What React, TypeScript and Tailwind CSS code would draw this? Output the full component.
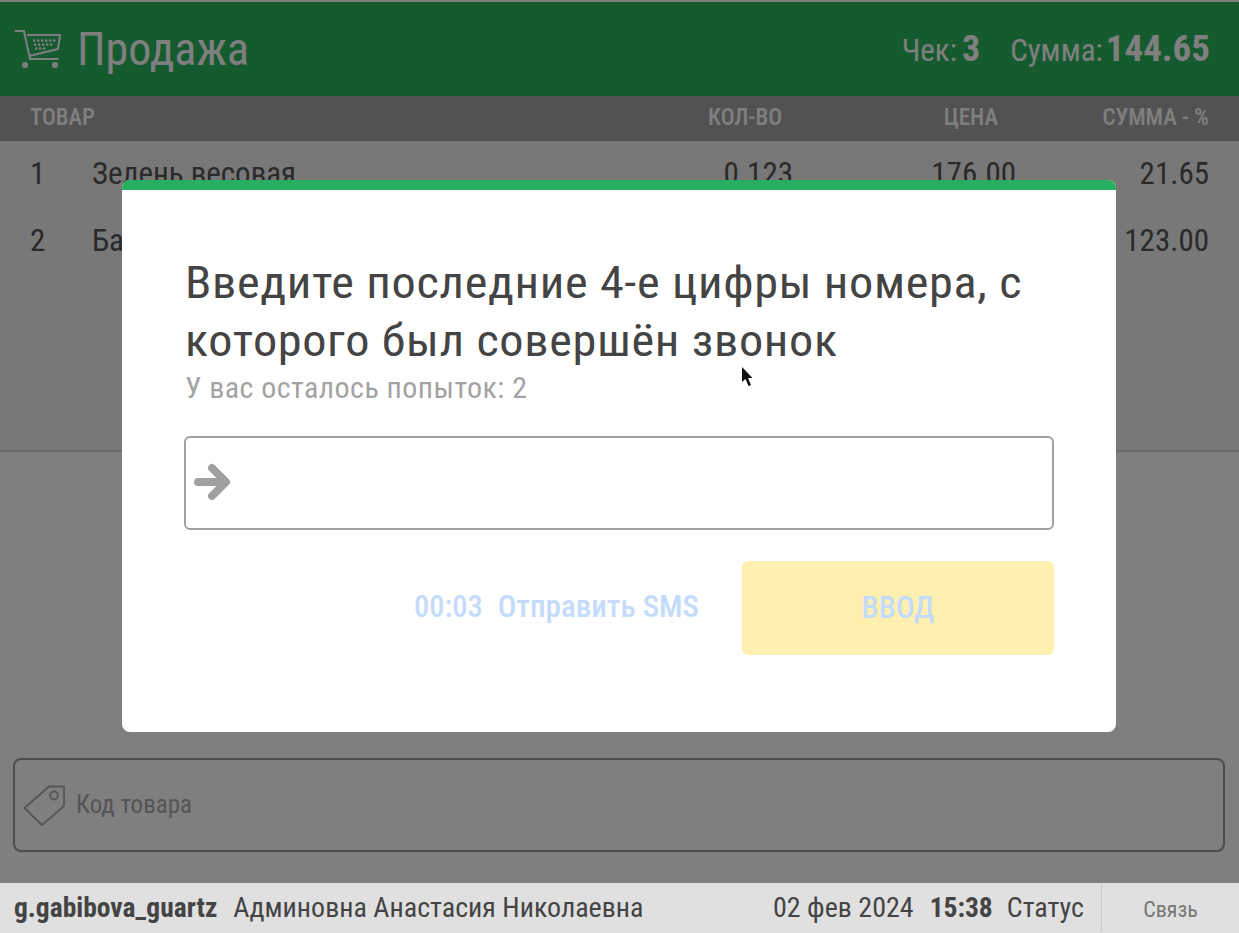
import React from "react";

const font = { fontFamily: '"Roboto Condensed", Roboto, "Noto Sans", sans-serif' };

function Cart() {
  const rows = [
    [19, 23, 27, 31, 35, 39],
    [20, 24, 28, 32, 36],
    [21, 25, 29],
  ];
  return (
    <svg width="48" height="40" viewBox="0 0 48 40" fill="none" className="shrink-0">
      <path d="M1.5 2H10L16 30H44" stroke="#fff" strokeWidth="2" strokeLinecap="round" strokeLinejoin="round" />
      <path d="M13 6H46L44 20L15 27" stroke="#fff" strokeWidth="2" strokeLinejoin="round" />
      {rows.map((xs, r) =>
        xs.map((x) => <rect key={`${r}-${x}`} x={x} y={10.5 + r * 4} width="2.4" height="2.2" fill="#fff" />)
      )}
      <circle cx="11" cy="36" r="3" fill="#fff" />
      <circle cx="41" cy="36" r="3" fill="#fff" />
    </svg>
  );
}

function Tag() {
  return (
    <svg width="42" height="42" viewBox="0 0 42 42" fill="none" className="shrink-0">
      <path d="M1.5 24L26 2.5H41V22L19 41Z" stroke="#aaaaaa" strokeWidth="1.8" strokeLinejoin="round" />
      <circle cx="31" cy="11.5" r="4" stroke="#aaaaaa" strokeWidth="1.8" />
    </svg>
  );
}

function Row({ n, name, qty, price, sum }: { n: string; name: string; qty: string; price: string; sum: string }) {
  return (
    <div className="flex h-[67px] items-center border-b border-[#f5f5f5] pr-[30px] pl-[30px] text-[31px] text-[#555555]">
      <span className="w-[62px]">{n}</span>
      <span className="flex-1">{name}</span>
      <span className="w-[120px] text-right">{qty}</span>
      <span className="w-[224px] pr-[1px] text-right">{price}</span>
      <span className="w-[192px] text-right">{sum}</span>
    </div>
  );
}

export default function App() {
  return (
    <div className="relative flex h-[933px] w-[1239px] flex-col overflow-hidden bg-white" style={font}>
      <header className="mt-[2px] flex h-[94px] shrink-0 items-center bg-[#2cb460] pr-[29px] pl-[14px] text-white">
        <Cart />
        <span className="ml-[15px] text-[46px] leading-none">Продажа</span>
        <div className="ml-auto flex items-baseline text-[31px]">
          <span>Чек:</span>
          <b className="ml-[5px] text-[36px]">3</b>
          <span className="ml-[30px]">Сумма:</span>
          <b className="ml-[3px] text-[37px]">144.65</b>
        </div>
      </header>
      <div className="flex h-[45px] shrink-0 items-center bg-[#a4a4a4] pr-[30px] pl-[30px] text-[23px] font-medium text-white">
        <span className="flex-1">ТОВАР</span>
        <span className="w-[120px] pr-[11px] text-right">КОЛ-ВО</span>
        <span className="w-[224px] pr-[19px] text-right">ЦЕНА</span>
        <span className="w-[192px] text-right">СУММА - %</span>
      </div>
      <div className="h-[311px] shrink-0 border-b-2 border-[#d8d8d8] bg-[#f0f0f0]">
        <Row n="1" name="Зелень весовая" qty="0.123" price="176.00" sum="21.65" />
        <Row n="2" name="Банан" qty="1.000" price="123.00" sum="123.00" />
      </div>
      <div className="flex flex-1 items-end pr-[14px] pb-[31px] pl-[13px]">
        <div className="flex h-[94px] w-full items-center rounded-lg border-2 border-[#999999] pl-[8px] text-[25px] text-[#aaaaaa]">
          <Tag />
          <span className="ml-[11px]">Код товара</span>
        </div>
      </div>

      <div className="absolute top-0 right-0 bottom-[50px] left-0 z-10 flex justify-center bg-black/50 pt-[180px] pr-[1px]">
        <div className="h-[552px] w-[994px] self-start overflow-hidden rounded-lg bg-white">
          <div className="h-[10px] bg-[#27ae60]" />
          <div className="px-[62px]">
            <h1 className="mt-[64px] ml-[1px] w-[800px] origin-left scale-x-[1.073] text-[45px] leading-[58px] font-normal tracking-[0.6px] text-[#444444]">
              Введите последние 4-е цифры номера, с которого был совершён звонок
            </h1>
            <p className="pl-[1px] text-[30px] leading-[36px] tracking-[0.45px] text-[#a3a3a3]">У вас осталось попыток: 2</p>
            <div className="mt-[30px] flex h-[94px] items-center rounded-md border-2 border-[#a0a0a0] pl-[8px]">
              <svg width="38" height="38" viewBox="0 0 38 38" fill="none" className="-mt-[2px]">
                <path d="M4 19H30M18 5L32 19L18 33" stroke="#a0a0a0" strokeWidth="8" strokeLinecap="round" strokeLinejoin="round" />
              </svg>
            </div>
            <div className="mt-[31px] flex items-center justify-end">
              <div className="-mt-[2px] flex items-baseline font-medium text-[#c5dbfb]">
                <span className="text-[30.5px]">00:03</span>
                <span className="ml-[15px] text-[31px]">Отправить SMS</span>
              </div>
              <div className="ml-[43px] flex h-[94px] w-[312px] items-center justify-center rounded-md bg-[#fff0b0] text-[31px] font-medium text-[#c5dbfb]">
                ВВОД
              </div>
            </div>
          </div>
        </div>
      </div>

      <svg width="14" height="22" viewBox="0 0 14 22" className="absolute top-[366px] left-[741px] z-20">
        <path d="M1 1v15l3.5-3 3 7 2.5-1-3-7h4.500z" fill="#111111" />
      </svg>

      <footer className="z-10 flex h-[50px] shrink-0 items-center bg-[#e0e0e0] pb-[1px] pl-[14px] text-[28px] text-[#444444]">
        <b className="text-[27.500px] font-bold">g.gabibova_guartz</b>
        <span className="ml-[16px]">Админовна Анастасия Николаевна</span>
        <span className="ml-auto">02 фев 2024</span>
        <b className="ml-[16px] text-[27.500px]">15:38</b>
        <span className="ml-[14px]">Статус</span>
        <div className="ml-[17px] flex h-full w-[138px] items-center justify-center border-l border-[#cccccc] pt-[3px] text-[22px] text-[#777777]">
          Связь
        </div>
      </footer>
    </div>
  );
}
